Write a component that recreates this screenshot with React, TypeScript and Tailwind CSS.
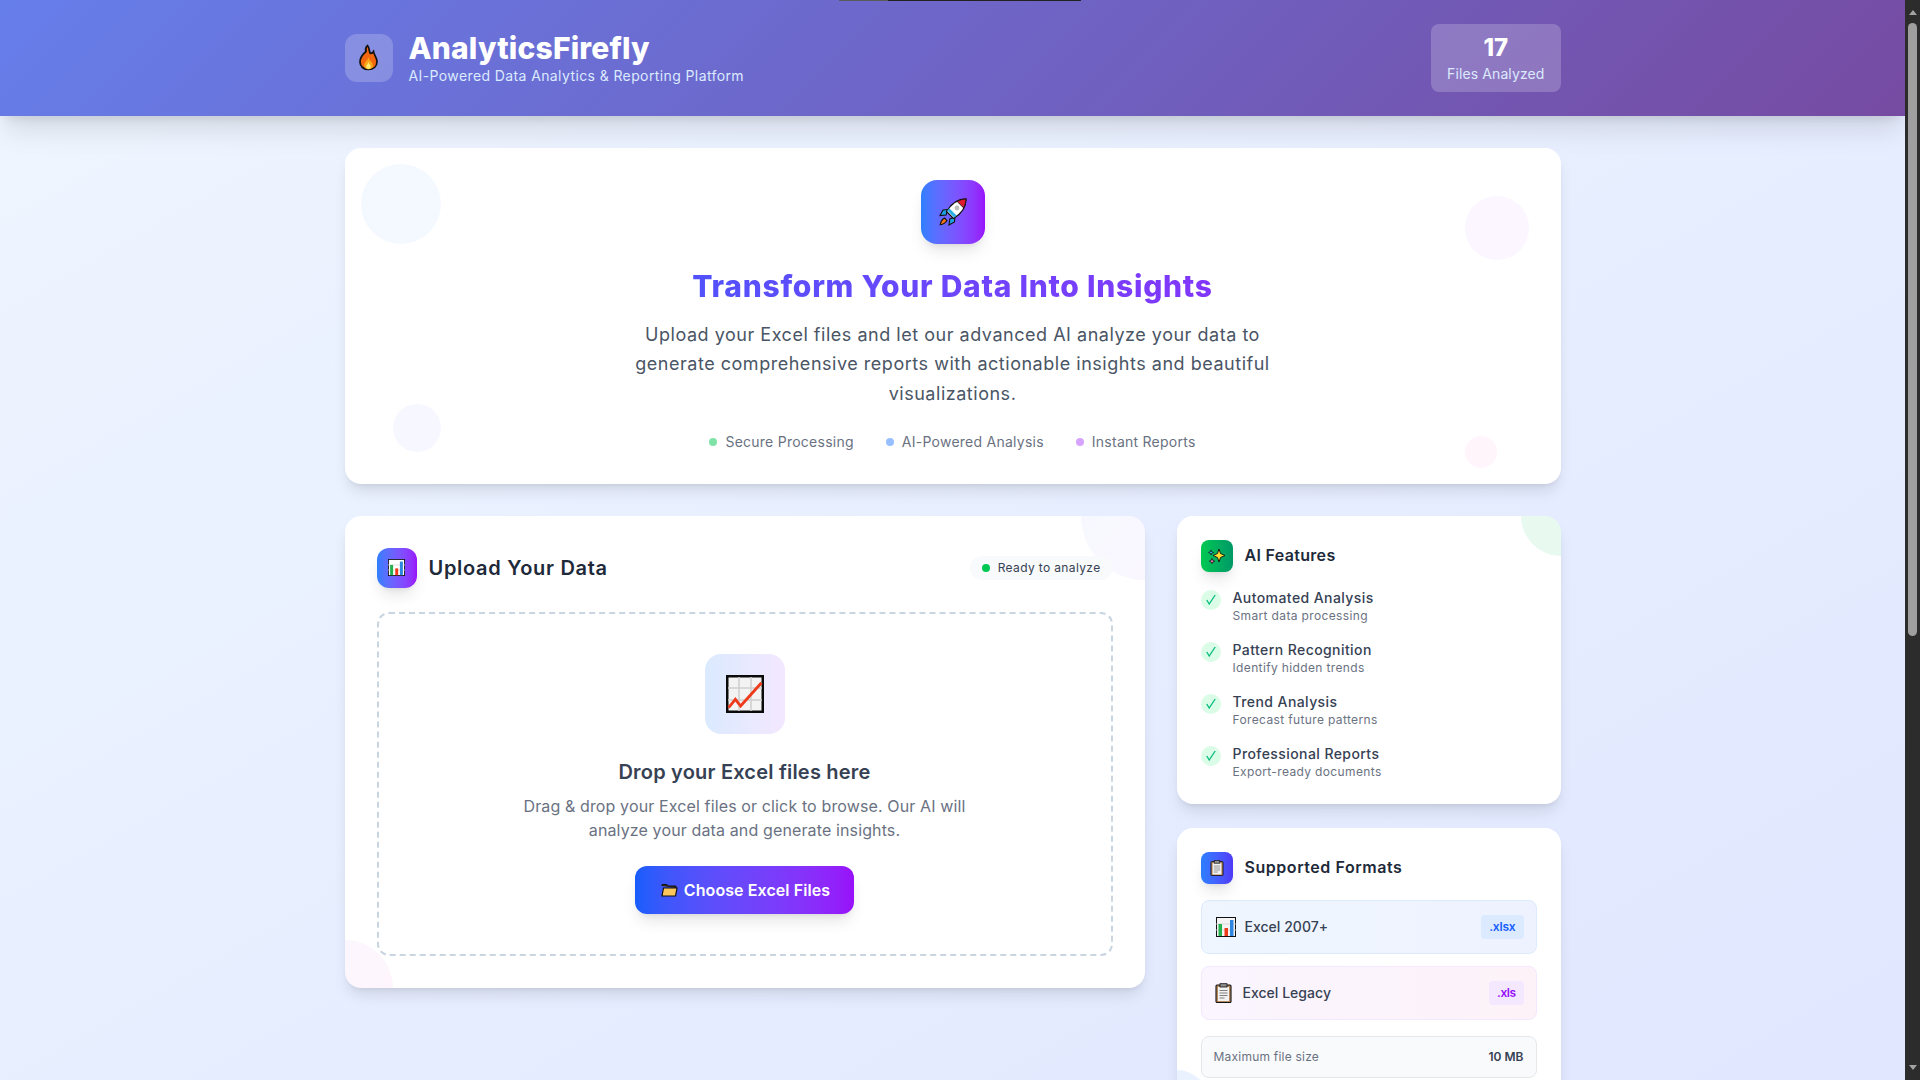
import type { ReactNode } from "react";

function FireEmoji() {
  return (
    <svg width="21" height="27" viewBox="0 0 20 27" className="-mt-px">
      <path d="M9 1.500C7.500 3 6.500 5 7.500 7.500 4.500 10 1.500 13.500 1.500 18c0 4.700 3.800 7.500 8.500 7.500s8.500-2.800 8.500-8c0-4-3-6.500-3.500-10-1 1.500-2.300 2.300-3.500 1.500C10.500 7 11 3.500 9 1.500Z" fill="#f2670f" stroke="#111" strokeWidth="1.700" />
      <path d="M10 13c-.5 3.500-4.500 5-4.500 8.800 0 2.200 2 3.500 4.500 3.500s4.500-1.300 4.500-3.800c0-3.500-3.800-4.800-4.500-8.500Z" fill="#f9a51a" />
      <path d="M10 18c-.4 2-2.200 2.800-2.200 4.500 0 1.400 1 2.500 2.200 2.500s2.200-1 2.200-2.500c0-1.700-1.800-2.500-2.200-4.500Z" fill="#fdeb6b" />
    </svg>
  );
}

function RocketEmoji() {
  return (
    <svg width="28" height="28" viewBox="0 0 28 28">
      <path d="M5.500 20C3 21.500 1.500 24.500 1.200 26.800c2.400-.3 5.300-1.800 6.800-4.300Z" fill="#f97316" stroke="#111" strokeWidth="1.100" />
      <path d="M9 11.500 4 12 1 17.500l6-.5Z" fill="#1e9fe0" stroke="#111" strokeWidth="1.100" />
      <path d="M16 19l-.5 5-5.500 3 .8-6Z" fill="#1e9fe0" stroke="#111" strokeWidth="1.100" />
      <path d="M27 1C19 1 12 6 7.500 13.500l7 7C22 16 27 9 27 1Z" fill="#fff" stroke="#111" strokeWidth="1.300" />
      <path d="M27 1c-3.200 0-6.200 1-8.800 2.500l6.300 6.300C26 7 27 4.200 27 1Z" fill="#e01b2f" stroke="#111" strokeWidth="0.900" />
      <path d="M10.500 10.500 17.500 17.500l-2.300 2-7-7Z" fill="#29aee8" />
      <circle cx="18" cy="10" r="2.400" fill="#bdbdbd" />
    </svg>
  );
}

function BarChartEmoji({ size, light }: { size: number; light?: boolean }) {
  return (
    <svg width={size} height={size} viewBox="0 0 20 20" className="shrink-0">
      <rect x="0.500" y="0.500" width="19" height="19" fill={light ? "#f4f4f4" : "#fff"} stroke="#111" strokeWidth="1" />
      <path d="M0 7h20M0 13h20" stroke="#d4d4d4" strokeWidth="0.800" />
      <rect x="2.500" y="7" width="3.500" height="12" fill="#22b14c" />
      <rect x="8.500" y="11" width="3.500" height="8" fill="#ee3b1b" />
      <rect x="14" y="3" width="3.500" height="16" fill="#2e86de" />
    </svg>
  );
}

function ChartUpEmoji() {
  return (
    <svg width="38" height="38" viewBox="0 0 38 38">
      <rect x="1.250" y="1.250" width="35.500" height="35.500" fill="#f3f3f3" stroke="#0a0a0a" strokeWidth="2.500" />
      <path d="M13 2v34M25 2v34M2 13h34M2 25h34" stroke="#d0d0d0" strokeWidth="1.600" />
      <path d="M2.600 32.700 9.400 24.300 14.600 31 35.500 7.700" fill="none" stroke="#ee3b1b" strokeWidth="2.800" />
    </svg>
  );
}

function FolderEmoji() {
  return (
    <svg width="19" height="14" viewBox="-2 0 19 14">
      <path d="M1 3V1.500h5l1 1.500h8V5" fill="#3b2a12" stroke="#111" strokeWidth="1" />
      <path d="M2.500 5H16l-1.500 8H1Z" fill="#fcc65c" stroke="#111" strokeWidth="1.200" />
    </svg>
  );
}

function SparklesEmoji() {
  return (
    <svg width="18" height="16" viewBox="0 0 18 16">
      <path d="M11 1l1.500 4.500L17 7.500l-4.500 2L11 14l-1.500-4.500L5 7.500l4.500-2Z" fill="#fde02f" stroke="#111" strokeWidth="0.900" />
      <path d="M4 10.500l.8 1.900 1.900.8-1.900.8-.8 1.700-.8-1.700-1.900-.8 1.900-.8Z" fill="#f472b6" stroke="#111" strokeWidth="0.700" />
      <path d="M3 2l.7 1.800 1.800.7-1.800.7L3 7l-.7-1.800L.5 4.500l1.800-.7Z" fill="#38bdf8" stroke="#111" strokeWidth="0.700" />
    </svg>
  );
}

function ClipboardEmoji({ width, height }: { width: number; height: number }) {
  return (
    <svg width={width} height={height} viewBox="0 0 17 20" className="shrink-0">
      <rect x="1" y="2" width="15" height="17.500" rx="1" fill="#b98a5e" stroke="#111" strokeWidth="1.100" />
      <rect x="3" y="4" width="11" height="14" fill="#f2f2f2" />
      <rect x="5" y="0.700" width="7" height="3.300" fill="#8f8f8f" stroke="#111" strokeWidth="0.800" />
      <path d="M4.500 7.500h8M4.500 10h8M4.500 12.500h8M4.500 15h5" stroke="#808080" strokeWidth="1" />
    </svg>
  );
}

function CheckMark() {
  return (
    <svg width="10" height="11" viewBox="0 0 10 11" fill="none" className="text-emerald-500">
      <path d="M.8 6 3.200 10 9.200 1" stroke="currentColor" strokeWidth="1.300" />
    </svg>
  );
}

function HeroBullet({ dot, label }: { dot: string; label: string }) {
  return (
    <div className="flex items-center gap-2">
      <span className={`h-2 w-2 rounded-full ${dot}`} />
      <span className="text-sm tracking-[0.018em] text-gray-500">{label}</span>
    </div>
  );
}

function HeroCard() {
  return (
    <section className="relative overflow-hidden rounded-2xl bg-white p-8 text-center shadow-lg">
      <div className="absolute top-4 left-4 h-20 w-20 rounded-full bg-blue-500/5" />
      <div className="absolute top-12 right-8 h-16 w-16 rounded-full bg-purple-500/5" />
      <div className="absolute bottom-8 left-12 h-12 w-12 rounded-full bg-indigo-500/5" />
      <div className="absolute right-16 bottom-4 h-8 w-8 rounded-full bg-pink-500/5" />

      <div className="relative">
        <div className="mx-auto mb-6 flex h-16 w-16 items-center justify-center rounded-2xl bg-linear-to-r from-blue-500 to-purple-600 shadow-lg">
          <RocketEmoji />
        </div>
        <h2 className="mb-4 bg-linear-to-r from-blue-600 to-purple-600 bg-clip-text text-3xl font-extrabold tracking-[0.024em] text-transparent">
          Transform Your Data Into Insights
        </h2>
        <p className="mx-auto max-w-2xl text-lg leading-relaxed tracking-[0.029em] text-gray-600">
          Upload your Excel files and let our advanced AI analyze your data to
          generate comprehensive reports with actionable insights and beautiful
          visualizations.
        </p>
        <div className="mt-6 flex items-center justify-center gap-8">
          <HeroBullet dot="bg-green-500/50" label="Secure Processing" />
          <HeroBullet dot="bg-blue-500/50" label="AI-Powered Analysis" />
          <HeroBullet dot="bg-purple-500/50" label="Instant Reports" />
        </div>
      </div>
    </section>
  );
}

function UploadCard() {
  return (
    <section className="relative col-span-2 self-start overflow-hidden rounded-2xl bg-white p-8 shadow-lg">
      <div className="absolute -top-16 -right-16 h-32 w-32 rounded-full bg-linear-to-br from-blue-500/5 to-purple-500/5" />
      <div className="absolute -bottom-12 -left-12 h-24 w-24 rounded-full bg-linear-to-br from-purple-500/5 to-pink-500/5" />

      <div className="relative">
        <div className="mb-6 flex items-center justify-between">
          <div className="flex items-center gap-3">
            <div className="flex h-10 w-10 items-center justify-center rounded-xl bg-linear-to-r from-blue-500 to-purple-600 shadow-lg">
              <BarChartEmoji size={17} />
            </div>
            <h3 className="text-xl font-semibold tracking-[0.035em] text-gray-800">Upload Your Data</h3>
          </div>
          <div className="flex items-center gap-2 rounded-full bg-gray-50 px-3 py-1">
            <span className="h-2 w-2 rounded-full bg-green-500" />
            <span className="text-xs tracking-[0.03em] text-gray-700">Ready to analyze</span>
          </div>
        </div>

        <div className="rounded-xl border-2 border-dashed border-slate-300 p-10 text-center">
          <div className="mx-auto mb-6 flex h-20 w-20 items-center justify-center rounded-2xl bg-linear-to-r from-blue-100 to-purple-100">
            <ChartUpEmoji />
          </div>
          <h4 className="mb-2 text-xl font-semibold tracking-[0.01em] text-gray-700">Drop your Excel files here</h4>
          <p className="mx-auto mb-6 max-w-md tracking-[0.008em] text-gray-500">
            Drag &amp; drop your Excel files or click to browse. Our AI will
            analyze your data and generate insights.
          </p>
          <button className="inline-flex items-center gap-1.5 rounded-xl bg-linear-to-r from-blue-600 to-purple-600 px-6 py-3 font-semibold text-white shadow-lg">
            <FolderEmoji />
            <span className="tracking-[0.005em]">Choose Excel Files</span>
          </button>
        </div>
      </div>
    </section>
  );
}

const features = [
  { title: "Automated Analysis", text: "Smart data processing" },
  { title: "Pattern Recognition", text: "Identify hidden trends" },
  { title: "Trend Analysis", text: "Forecast future patterns" },
  { title: "Professional Reports", text: "Export-ready documents" },
];

function SideHeading({
  badge,
  title,
  tracking,
  children,
}: {
  badge: string;
  title: string;
  tracking: string;
  children: ReactNode;
}) {
  return (
    <div className="mb-4 flex items-center gap-3">
      <div className={`flex h-8 w-8 items-center justify-center rounded-lg bg-linear-to-r shadow-lg ${badge}`}>
        {children}
      </div>
      <h3 className={`-mt-0.5 font-semibold text-gray-800 ${tracking}`}>{title}</h3>
    </div>
  );
}

function FeaturesCard() {
  return (
    <section className="relative overflow-hidden rounded-2xl bg-white p-6 shadow-lg">
      <div className="absolute -top-10 -right-10 h-20 w-20 rounded-full bg-green-500/[0.09]" />
      <div className="relative">
        <SideHeading badge="from-green-500 to-emerald-600" title="AI Features" tracking="tracking-[0.02em]">
          <SparklesEmoji />
        </SideHeading>
        <div className="space-y-4">
          {features.map((feature) => (
            <div key={feature.title} className="flex items-start gap-3">
              <div className="mt-0.5 flex h-5 w-5 items-center justify-center rounded-full bg-green-100">
                <CheckMark />
              </div>
              <div>
                <p className="text-sm font-medium tracking-[0.03em] text-gray-700">{feature.title}</p>
                <p className="text-xs tracking-[0.03em] text-gray-500">{feature.text}</p>
              </div>
            </div>
          ))}
        </div>
      </div>
    </section>
  );
}

function FormatsCard() {
  return (
    <section className="relative overflow-hidden rounded-2xl bg-white p-6 shadow-lg">
      <div className="absolute -bottom-8 -left-8 h-16 w-16 rounded-full bg-blue-500/10" />
      <div className="relative">
        <SideHeading badge="from-blue-500 to-indigo-600" title="Supported Formats" tracking="tracking-[0.034em]">
          <ClipboardEmoji width={14} height={16} />
        </SideHeading>
        <div className="space-y-3">
          <div className="flex items-center justify-between rounded-lg border border-blue-100 bg-linear-to-r from-blue-50 to-indigo-50 p-3">
            <div className="flex items-center gap-3">
              <div className="flex h-7 w-[19px] items-center pl-0.5">
                <BarChartEmoji size={20} light />
              </div>
              <span className="text-sm font-medium tracking-[0.002em] text-gray-700">Excel 2007+</span>
            </div>
            <span className="rounded bg-blue-100 px-2 py-1 text-xs font-semibold tracking-[-0.015em] text-blue-600">.xlsx</span>
          </div>
          <div className="flex items-center justify-between rounded-lg border border-purple-100 bg-linear-to-r from-purple-50 to-pink-50 p-3">
            <div className="flex items-center gap-3">
              <div className="flex h-7 w-[17px] items-center pl-px">
                <ClipboardEmoji width={17} height={20} />
              </div>
              <span className="text-sm font-medium tracking-[0.002em] text-gray-700">Excel Legacy</span>
            </div>
            <span className="rounded bg-purple-100 px-2 py-1 text-xs font-semibold tracking-[-0.04em] text-purple-600">.xls</span>
          </div>
        </div>
        <div className="mt-4 flex items-center justify-between rounded-lg border border-gray-200 bg-gray-50 p-3 text-xs">
          <span className="tracking-[0.018em] text-gray-500">Maximum file size</span>
          <span className="font-semibold text-gray-700">10 MB</span>
        </div>
      </div>
    </section>
  );
}

function FakeScrollbar() {
  return (
    <div className="flex h-full w-[15px] shrink-0 flex-col items-center bg-[#2c2c2c]">
      <div className="mt-[10px] h-0 w-0 border-x-[4.500px] border-b-[5px] border-x-transparent border-b-[#a3a3a3]" />
      <div className="mt-2 h-[613px] w-[9px] rounded-t-[4.500px] rounded-b-[4.500px] bg-[#9f9f9f]" />
      <div className="mt-auto mb-[10px] h-0 w-0 border-x-[4.500px] border-t-[5px] border-x-transparent border-t-[#a3a3a3]" />
    </div>
  );
}

export default function App() {
  return (
    <div className="flex h-screen overflow-hidden font-[Inter,sans-serif]">
      <div className="relative min-w-0 flex-1 overflow-hidden bg-linear-to-br from-blue-50 to-indigo-100">
        <header className="relative bg-[linear-gradient(135deg,#667eea,#764ba2)] shadow-xl">
          <div className="mx-auto flex max-w-7xl items-center justify-between px-8 py-6">
            <div className="flex items-center gap-4">
              <div className="flex h-12 w-12 items-center justify-center rounded-xl bg-white/20">
                <FireEmoji />
              </div>
              <div>
                <h1 className="-mt-px text-3xl font-extrabold tracking-[0.006em] text-white">AnalyticsFirefly</h1>
                <p className="text-sm tracking-[0.028em] text-blue-100">AI-Powered Data Analytics &amp; Reporting Platform</p>
              </div>
            </div>
            <div className="rounded-lg bg-white/20 px-4 py-2 text-center">
              <div className="text-2xl font-extrabold text-white">17</div>
              <div className="text-sm tracking-[0.008em] text-blue-100">Files Analyzed</div>
            </div>
          </div>
        </header>

        <main className="mx-auto max-w-7xl space-y-8 px-8 py-8">
          <HeroCard />
          <div className="grid grid-cols-3 gap-8">
            <UploadCard />
            <div className="space-y-6">
              <FeaturesCard />
              <FormatsCard />
            </div>
          </div>
        </main>
        <div className="absolute top-0 left-[839px] flex h-px">
          <div className="w-[49px] bg-[#5a5a5a]" />
          <div className="w-[193px] bg-[#222222]" />
        </div>
      </div>
      <FakeScrollbar />
    </div>
  );
}
